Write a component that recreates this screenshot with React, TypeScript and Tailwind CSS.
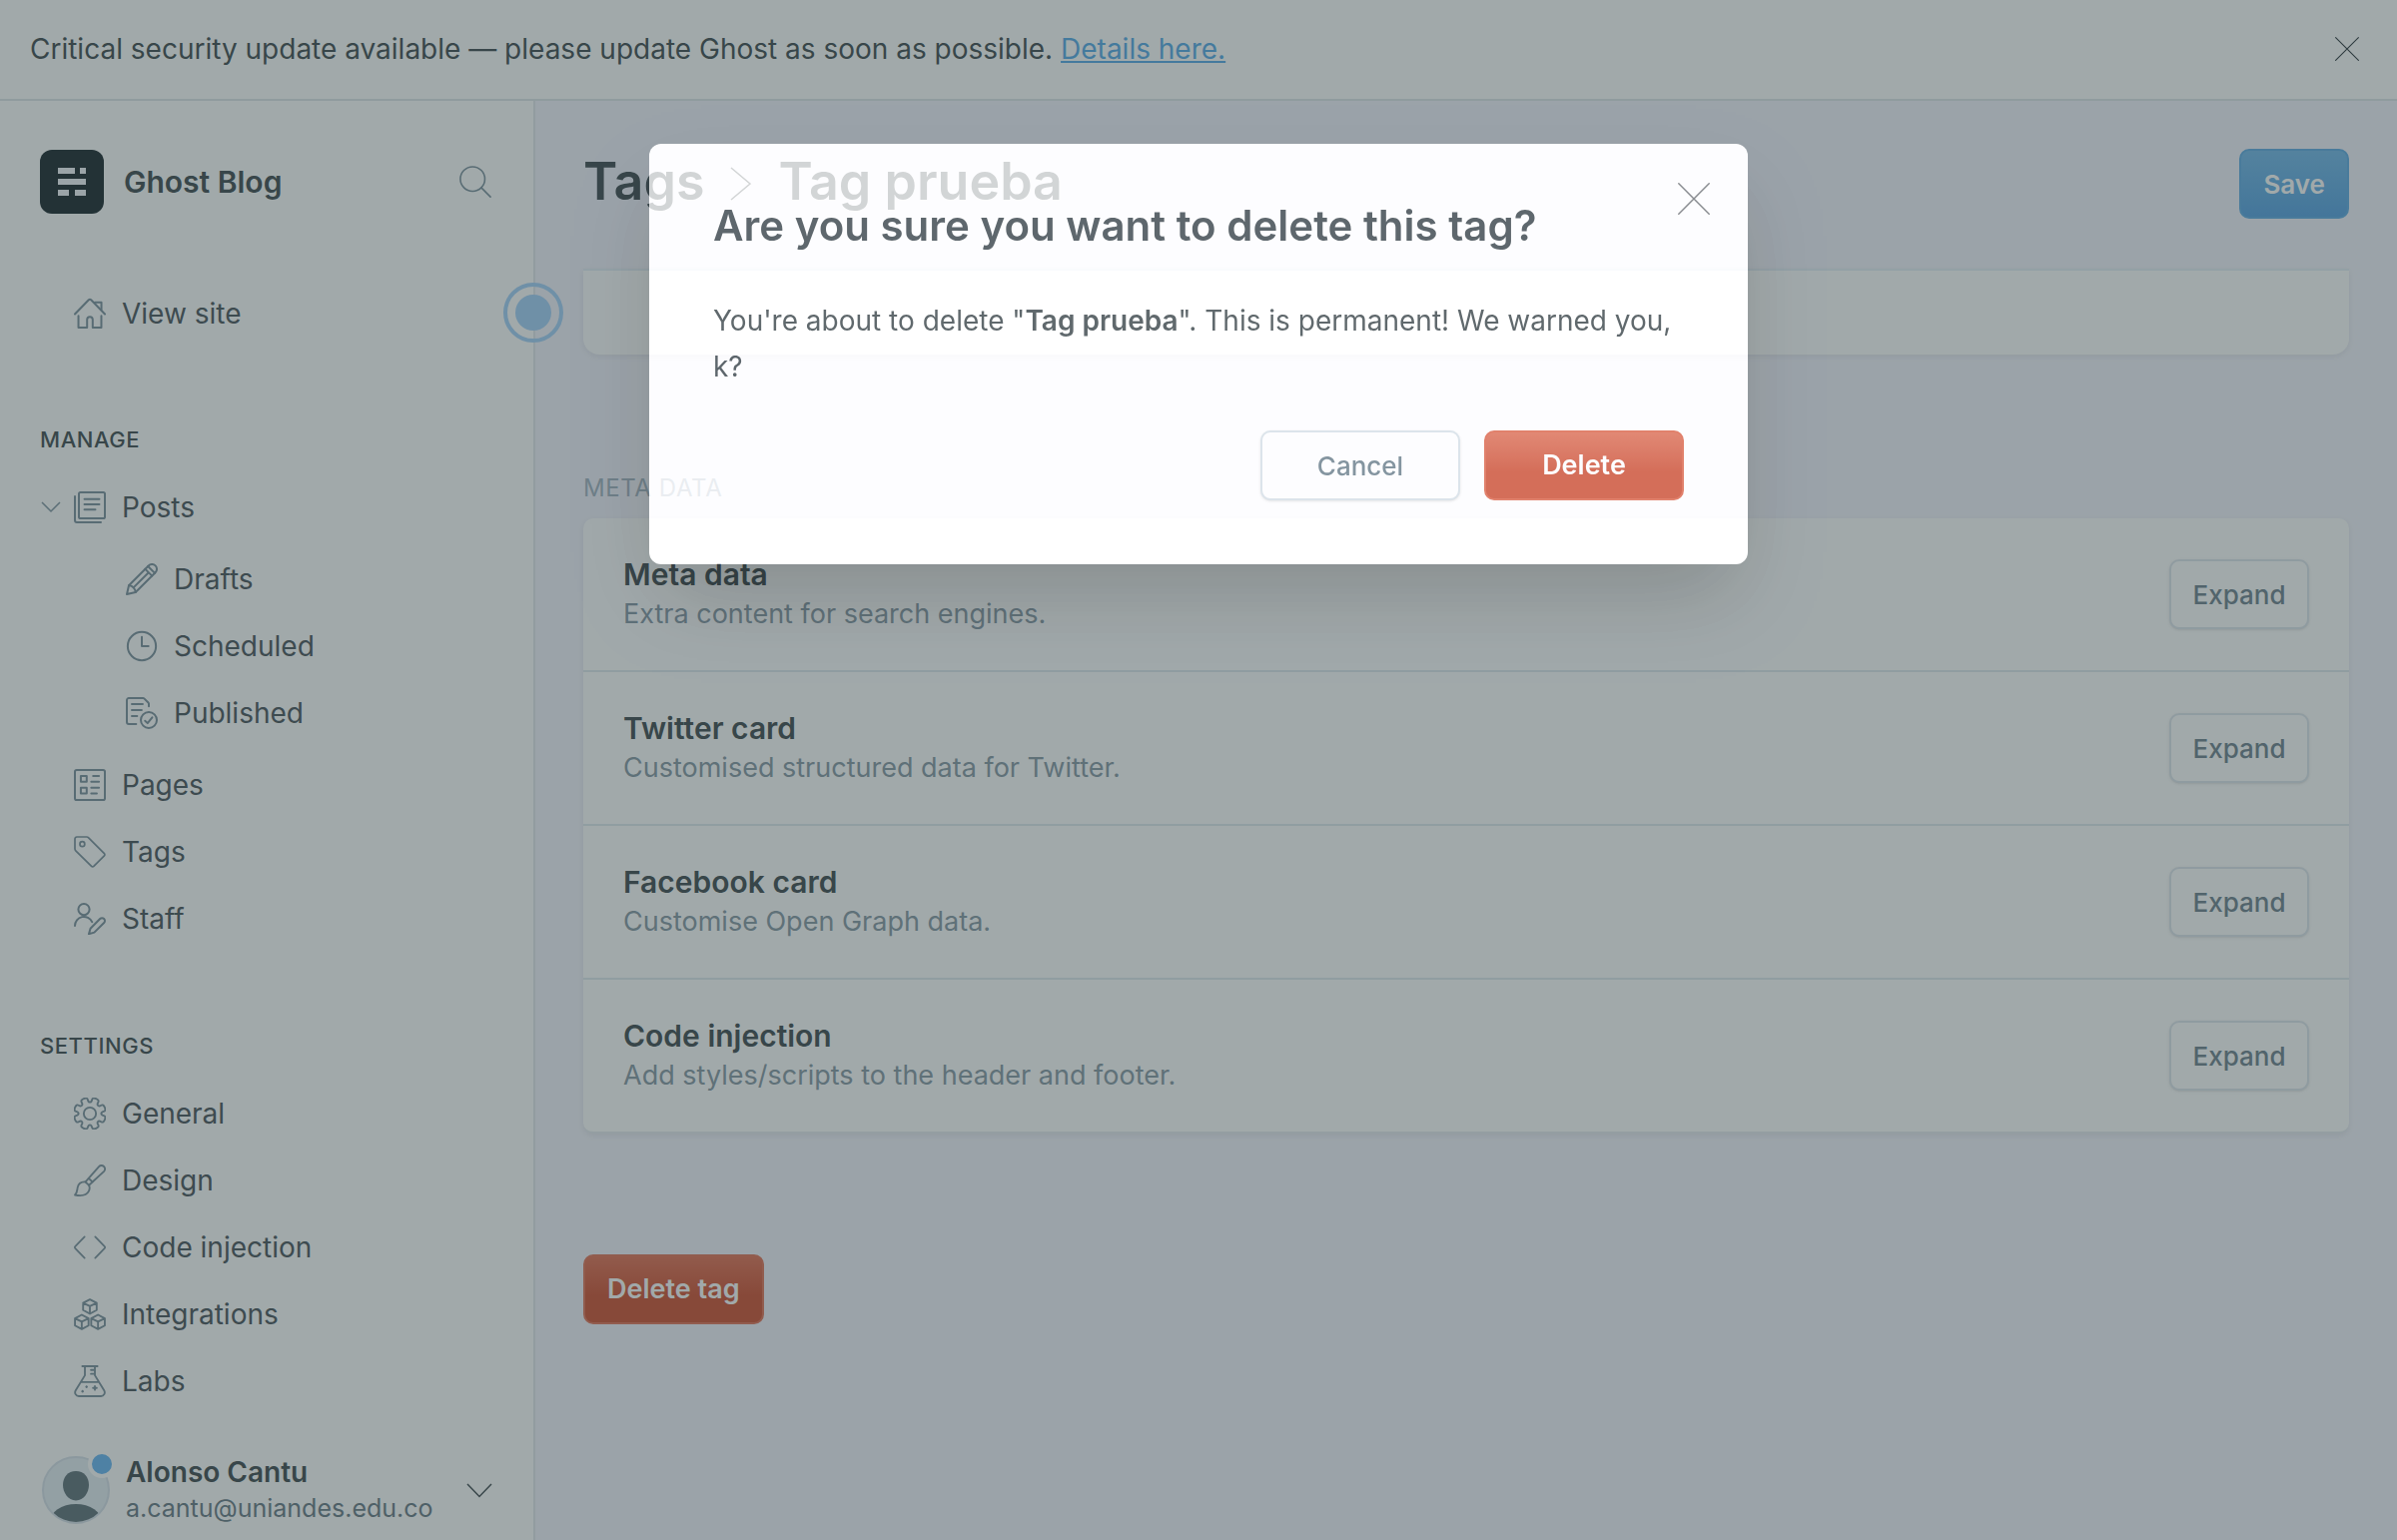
import React, { ReactNode } from "react";

function Icon({ children, size = "size-8", width = 1.5 }: { children: ReactNode; size?: string; width?: number }) {
  return (
    <svg
      viewBox="0 0 24 24"
      fill="none"
      stroke="currentColor"
      strokeWidth={width}
      strokeLinecap="round"
      strokeLinejoin="round"
      aria-hidden="true"
      className={`${size} shrink-0`}
    >
      {children}
    </svg>
  );
}

const HomeIcon = () => (
  <Icon>
    <path d="M.75 12.4 11.1 1.7a1.3 1.3 0 0 1 1.8 0L23.25 12.4" />
    <path d="M3.4 13.6v8.9h6.5v-6a2.1 2.1 0 0 1 4.2 0v6h6.5v-8.9" />
    <path d="M15.75 3.6h4.9V9" />
  </Icon>
);

const PostsIcon = () => (
  <Icon>
    <rect x="3.75" y=".75" width="19.5" height="19.5" rx="1.2" />
    <path d="M.75 3.75v18a1.5 1.5 0 0 0 1.5 1.5h18M7.9 5.8h11.2M7.9 9.7h11.2M7.9 13.6h8.2" />
  </Icon>
);

const PencilIcon = () => (
  <Icon>
    <path d="M22.19 1.81a3.64 3.64 0 0 0-5.17.02L2.25 16.66.75 23.25l6.58-1.55L22.17 6.98a3.64 3.64 0 0 0 .02-5.17z" />
    <path d="m16.6 2.26 5.15 5.15M14.5 4.35l5.15 5.15M17.1 6.9 5.7 18.3M2.25 16.66c1.3-.2 2.6.5 3.45 1.64.9.9 1.6 2 1.63 3.4" />
  </Icon>
);

const ClockIcon = () => (
  <Icon>
    <circle cx="12" cy="12" r="10.6" />
    <path d="M12 5v7h5" />
  </Icon>
);

const PublishedIcon = () => (
  <Icon>
    <path d="M7.75 20.25h-5.5a1.5 1.5 0 0 1-1.5-1.5V2.25a1.5 1.5 0 0 1 1.5-1.5h10.6a1.5 1.5 0 0 1 1.06.44l2.9 2.9a1.5 1.5 0 0 1 .44 1.06v1.7" />
    <path d="M4.5 5.25h8.2M4.5 9.75h7.4M4.5 14.25h4M14.4 17.8l1.9 1.8 3.5-4.4" />
    <circle cx="17.25" cy="17.25" r="6" />
  </Icon>
);

const PagesIcon = () => (
  <Icon>
    <rect x=".75" y=".75" width="22.5" height="22.5" rx="1.4" />
    <rect x="5.2" y="5.2" width="4.4" height="4.4" />
    <rect x="5.2" y="14" width="4.4" height="4.4" />
    <path d="M14.4 5.2h4.4M13 9.6h5.8M13 14h5.8M13 18.4h4.2" />
  </Icon>
);

const TagIcon = () => (
  <Icon width={1.3}>
    <path d="M2.2.75h7.4a2 2 0 0 1 1.4.6l11.8 11.8a1.2 1.2 0 0 1 0 1.7l-7.9 7.9a1.2 1.2 0 0 1-1.7 0L1.35 11.1a2 2 0 0 1-.6-1.4V2.2A1.45 1.45 0 0 1 2.2.75z" />
    <circle cx="6.3" cy="6.1" r="1.8" />
  </Icon>
);

const StaffIcon = () => (
  <Icon>
    <circle cx="7.5" cy="4.95" r="4.2" />
    <path d="M.75 17.2a6.75 6.75 0 0 1 12.9-2.8" />
    <path d="M22.6 12a2.1 2.1 0 0 0-3 0l-7.2 7.3-1.2 4.1 4.1-1.2L22.6 15a2.1 2.1 0 0 0 0-3z" />
  </Icon>
);

function gearPath() {
  const pts: [number, number][] = [];
  for (let i = 0; i < 8; i++) {
    const a = i * 45 + 22.5;
    const add = (deg: number, r: number) => {
      const t = ((a + deg) * Math.PI) / 180;
      pts.push([12 + r * Math.cos(t), 12 + r * Math.sin(t)]);
    };
    add(-15, 8.6);
    add(-13, 12.4);
    add(13, 12.4);
    add(15, 8.6);
  }
  const n = pts.length;
  const mid = (i: number) => {
    const p = pts[i % n];
    const q = pts[(i + 1) % n];
    return `${((p[0] + q[0]) / 2).toFixed(2)} ${((p[1] + q[1]) / 2).toFixed(2)}`;
  };
  let d = `M${mid(0)}`;
  for (let i = 1; i <= n; i++) {
    const p = pts[i % n];
    d += `Q${p[0].toFixed(2)} ${p[1].toFixed(2)} ${mid(i)}`;
  }
  return d + "z";
}

const GearIcon = () => (
  <Icon width={1.4}>
    <path d={gearPath()} />
    <circle cx="12" cy="12" r="4.6" />
  </Icon>
);

const BrushIcon = () => (
  <Icon width={1.4}>
    <path d="M22.5 1.5a2.6 2.6 0 0 0-3.7.1L8.7 13.1l2.6 2.5L22.6 5.2a2.6 2.6 0 0 0-.1-3.7z" />
    <path d="m11.1 10.4 2.9 2.7" />
    <path d="M8.7 13.1c-2.9-.2-5.3 1.2-5.9 4.1-.5 2.6-.3 4-2 5.7 4.2.8 8.7.4 10.4-2.9.8-1.6.7-3.1.1-4.4" />
  </Icon>
);

const CodeIcon = () => (
  <Icon width={1.3}>
    <path d="M8 4 .9 11.4a.8.8 0 0 0 0 1.2L8 20M16 4l7.1 7.4a.8.8 0 0 1 0 1.2L16 20" />
  </Icon>
);

const cube = (x: number, y: number) =>
  `M${x} ${y - 5.4}l5.1 2.7v5.3l-5.1 2.8-5.1-2.8v-5.3zM${x - 5.1} ${y - 2.7}l5.1 2.4 5.1-2.4M${x} ${y - 0.3}v5.7`;

const BoxesIcon = () => (
  <Icon width={1.4}>
    <path d={cube(12, 6.2)} />
    <path d={cube(5.9, 17.8)} />
    <path d={cube(18.1, 17.8)} />
  </Icon>
);

const FlaskIcon = () => (
  <Icon width={1.4}>
    <path d="M6.3.75h11.4M8.25.75V7.6L1.3 19a2.8 2.8 0 0 0 2.4 4.25h16.6A2.8 2.8 0 0 0 22.7 19L15.75 7.6V.75M5.2 12.7h13.6M12.8 3.6h2.9M12.8 6.5h2.9" />
    <path d="M15.75 15.7v2.8M14.35 17.1h2.8M9.5 15.9v.6M9.2 16.2h.6M6.5 19.3v.6M6.2 19.6h.6" />
  </Icon>
);

const SearchIcon = () => (
  <Icon width={1.2}>
    <circle cx="9.9" cy="9.9" r="9.2" />
    <path d="m16.6 16.6 6.7 6.7" />
  </Icon>
);

const CloseIcon = ({ size }: { size: string }) => (
  <Icon size={size} width={1.1}>
    <path d="M.6.6l22.8 22.8M23.4.6.6 23.4" />
  </Icon>
);

function NavItem({ icon, label, before }: { icon: ReactNode; label: string; before?: ReactNode }) {
  return (
    <li className="flex h-[67px] items-center">
      <span className="flex w-[34px] shrink-0 items-center text-[#798e9c]">{before}</span>
      <a href="#" className="flex items-center gap-4 text-[#3e4850]">
        <span className="text-[#728896]">{icon}</span>
        {label}
      </a>
    </li>
  );
}

function SubItem({ icon, label }: { icon: ReactNode; label: string }) {
  return (
    <li className="h-[67px] pl-[86px]">
      <a href="#" className="flex h-full items-center gap-4 text-[#3e4850]">
        <span className="text-[#728896]">{icon}</span>
        {label}
      </a>
    </li>
  );
}

const label = "text-[22px] leading-8 font-medium tracking-wide text-[#343f44]";

function Sidebar() {
  return (
    <aside className="flex w-[536px] shrink-0 flex-col border-r-2 border-[#e1e6ec] bg-white px-10 pt-[49px] pb-[14px]">
      <header className="flex items-center">
        <svg viewBox="0 0 64 64" className="size-16" aria-hidden="true">
          <rect width="64" height="64" rx="12" fill="#0b191f" />
          <path
            d="M18 18h17v6H18zM40 18h6v6h-6zM18 29h28v6H18zM18 40h11v6H18zM35 40h11v6H35z"
            fill="#f4f6fb"
          />
        </svg>
        <span className="ml-5 text-[30px] font-semibold text-[#343f44]">Ghost Blog</span>
        <button type="button" aria-label="Search" className="mr-[2px] ml-auto text-[#728896]">
          <SearchIcon />
        </button>
      </header>

      <nav className="text-[28px]">
        <ul className="mt-[66px]">
          <NavItem icon={<HomeIcon />} label="View site" />
        </ul>

        <h2 className={`mt-[77px] ${label}`}>MANAGE</h2>
        <ul className="mt-[18px]">
          <NavItem
            icon={<PostsIcon />}
            label="Posts"
            before={
              <svg viewBox="0 0 20 12" className="ml-px h-3 w-5" fill="none" stroke="currentColor" strokeWidth="1.5" aria-hidden="true">
                <path d="m1 1 9 9 9-9" />
              </svg>
            }
          />
          <li>
            <ul className="my-[5px]">
              <SubItem icon={<PencilIcon />} label="Drafts" />
              <SubItem icon={<ClockIcon />} label="Scheduled" />
              <SubItem icon={<PublishedIcon />} label="Published" />
            </ul>
          </li>
          <NavItem icon={<PagesIcon />} label="Pages" />
          <NavItem icon={<TagIcon />} label="Tags" />
          <NavItem icon={<StaffIcon />} label="Staff" />
        </ul>

        <h2 className={`mt-[78px] ${label}`}>SETTINGS</h2>
        <ul className="mt-[18px]">
          <NavItem icon={<GearIcon />} label="General" />
          <NavItem icon={<BrushIcon />} label="Design" />
          <NavItem icon={<CodeIcon />} label="Code injection" />
          <NavItem icon={<BoxesIcon />} label="Integrations" />
          <NavItem icon={<FlaskIcon />} label="Labs" />
        </ul>
      </nav>

      <footer className="mt-auto flex items-center">
        <span className="relative ml-[2px] size-[68px] shrink-0">
          <svg viewBox="0 0 68 68" className="size-full" aria-hidden="true">
            <clipPath id="avatar">
              <circle cx="34" cy="34" r="32" />
            </clipPath>
            <circle cx="34" cy="34" r="33" fill="#e4edf4" stroke="#d5dee8" strokeWidth="2" />
            <path d="M34 15c8 0 13 6 13 14 0 7-5 15.5-13 15.5S21 36 21 29c0-8 5-14 13-14z" fill="#556870" />
            <ellipse cx="34" cy="66" rx="26" ry="18" fill="#556870" clipPath="url(#avatar)" />
          </svg>
          <span className="absolute -top-1.5 -right-1.5 size-7 rounded-full border-4 border-white bg-[#5eb1f3]" />
        </span>
        <span className="ml-4 flex flex-col leading-9">
          <strong className="text-[28px] font-semibold text-[#343f44]">Alonso Cantu</strong>
          <span className="text-[25px] text-[#5f727d]">a.cantu@uniandes.edu.co</span>
        </span>
        <button type="button" aria-label="Account menu" className="mr-px ml-auto text-[#343f44]">
          <svg viewBox="0 0 26 15" className="h-[15px] w-[26px]" fill="none" stroke="currentColor" strokeWidth="1.5" aria-hidden="true">
            <path d="m1 1 12 12.5L25 1" />
          </svg>
        </button>
      </footer>
    </aside>
  );
}

const rows = [
  ["Meta data", "Extra content for search engines."],
  ["Twitter card", "Customised structured data for Twitter."],
  ["Facebook card", "Customise Open Graph data."],
  ["Code injection", "Add styles/scripts to the header and footer."],
];

function Main() {
  return (
    <main className="flex min-w-0 flex-1 flex-col items-stretch bg-[#f4f4fd] px-12 pt-12">
      <header className="flex h-[70px] items-center">
        <h1 className="flex items-center pb-1 text-[52px] leading-none font-semibold text-[#343f44]">
          <a href="#">Tags</a>
          <svg viewBox="0 0 22 34" className="mx-[26px] mt-1 h-[34px] w-[22px]" fill="none" stroke="currentColor" strokeWidth="1.5" aria-hidden="true">
            <path d="m1 1 19 16L1 33" />
          </svg>
          Tag prueba
        </h1>
        <button
          type="button"
          className="ml-auto h-[70px] rounded-[10px] border-2 border-[#54a6e2] bg-linear-to-b from-[#69b4e8] to-[#4a9ce0] px-[22px] text-[26px] font-semibold text-white"
        >
          Save
        </button>
      </header>

      <div className="mt-[50px] h-[86px] rounded-b-2xl border-t-2 border-[#e3edf5] bg-white shadow-[0_2px_6px_rgba(0,0,0,0.08)]" />

      <h2 className="mt-[118px] text-[24px] leading-8 tracking-wide text-[#9eafbd]">META DATA</h2>
      <section className="mt-[14px] rounded-[10px] border-b-2 border-[#e6eaf0] bg-white shadow-[0_2px_6px_rgba(0,0,0,0.08)]">
        {rows.map(([title, text]) => (
          <div key={title} className="flex items-center border-b-2 border-[#dfe7ee] px-10 py-10 last:border-b-0">
            <div className="-my-0.5 flex flex-1 flex-col gap-1">
              <h3 className="text-[30px] leading-9 font-semibold text-[#343f44]">{title}</h3>
              <p className="text-[27px] leading-9 text-[#7f929f]">{text}</p>
            </div>
            <button
              type="button"
              className="h-[70px] w-[140px] rounded-[10px] border-2 border-[#dde4ec] bg-white text-[26px] font-medium text-[#657a86] shadow-sm"
            >
              Expand
            </button>
          </div>
        ))}
      </section>

      <button
        type="button"
        className="mt-[121px] h-[70px] self-start rounded-[10px] border-2 border-[#e0694c] bg-linear-to-b from-[#e26748] to-[#cd4423] to-60% px-[22px] text-[27px] font-semibold text-white"
      >
        Delete tag
      </button>
    </main>
  );
}

function DeleteDialog() {
  return (
    <div className="fixed inset-0 flex items-start justify-center overflow-hidden pt-36">
      <div
        role="dialog"
        aria-modal="true"
        aria-labelledby="dialog-title"
        className="relative w-[1100px] rounded-xl bg-white px-16 pt-14 pb-16 text-[#343f44] opacity-78 shadow-[0_40px_80px_-12px_rgba(0,0,0,0.26),0_0_0_3000px_rgba(62,78,82,0.624)]"
      >
        <button type="button" aria-label="Close" className="absolute top-[39px] right-[38px] text-[#6b6f72]">
          <CloseIcon size="size-8" />
        </button>
        <h2 id="dialog-title" className="text-[42px] leading-[52px] font-semibold">
          Are you sure you want to delete this tag?
        </h2>
        <p className="mt-[46px] text-[28px] leading-[46px]">
          You&apos;re about to delete &quot;<strong className="font-semibold">Tag prueba</strong>&quot;. This is
          permanent! We warned you, k?
        </p>
        <div className="mt-[41px] flex justify-end gap-6 text-[26px]">
          <button
            type="button"
            className="h-[70px] w-[200px] rounded-[10px] border-2 border-[#d5dfe6] bg-white font-medium text-[#657a86] shadow-sm"
          >
            Cancel
          </button>
          <button
            type="button"
            className="h-[70px] w-[200px] rounded-[10px] border-2 border-[#dc6043] bg-linear-to-b from-[#dc6a4e] to-[#cb482b] to-60% text-[27px] font-semibold text-white"
          >
            Delete
          </button>
        </div>
      </div>
    </div>
  );
}

export default function App() {
  return (
    <div className="relative flex min-h-screen flex-col bg-white font-[Inter,sans-serif]">
      <div className="flex h-[101px] items-center border-b-2 border-[#dce3e8] bg-white px-[30px] pb-[2px]">
        <p className="text-[28px] text-[#343f44]">
          Critical security update available — please update Ghost as soon as possible.{" "}
          <a href="#" className="text-[#4ba4e6] underline">
            Details here.
          </a>
        </p>
        <button type="button" aria-label="Dismiss" className="mr-2 ml-auto text-[#1f2a30]">
          <CloseIcon size="size-6" />
        </button>
      </div>
      <div className="relative flex flex-1">
        <Sidebar />
        <Main />
        <span className="absolute top-[182px] left-[504px] flex size-[60px] items-center justify-center rounded-full border-4 border-[#9ecefa]">
          <span className="size-9 rounded-full bg-[#9ecefa]" />
        </span>
      </div>
      <DeleteDialog />
    </div>
  );
}
